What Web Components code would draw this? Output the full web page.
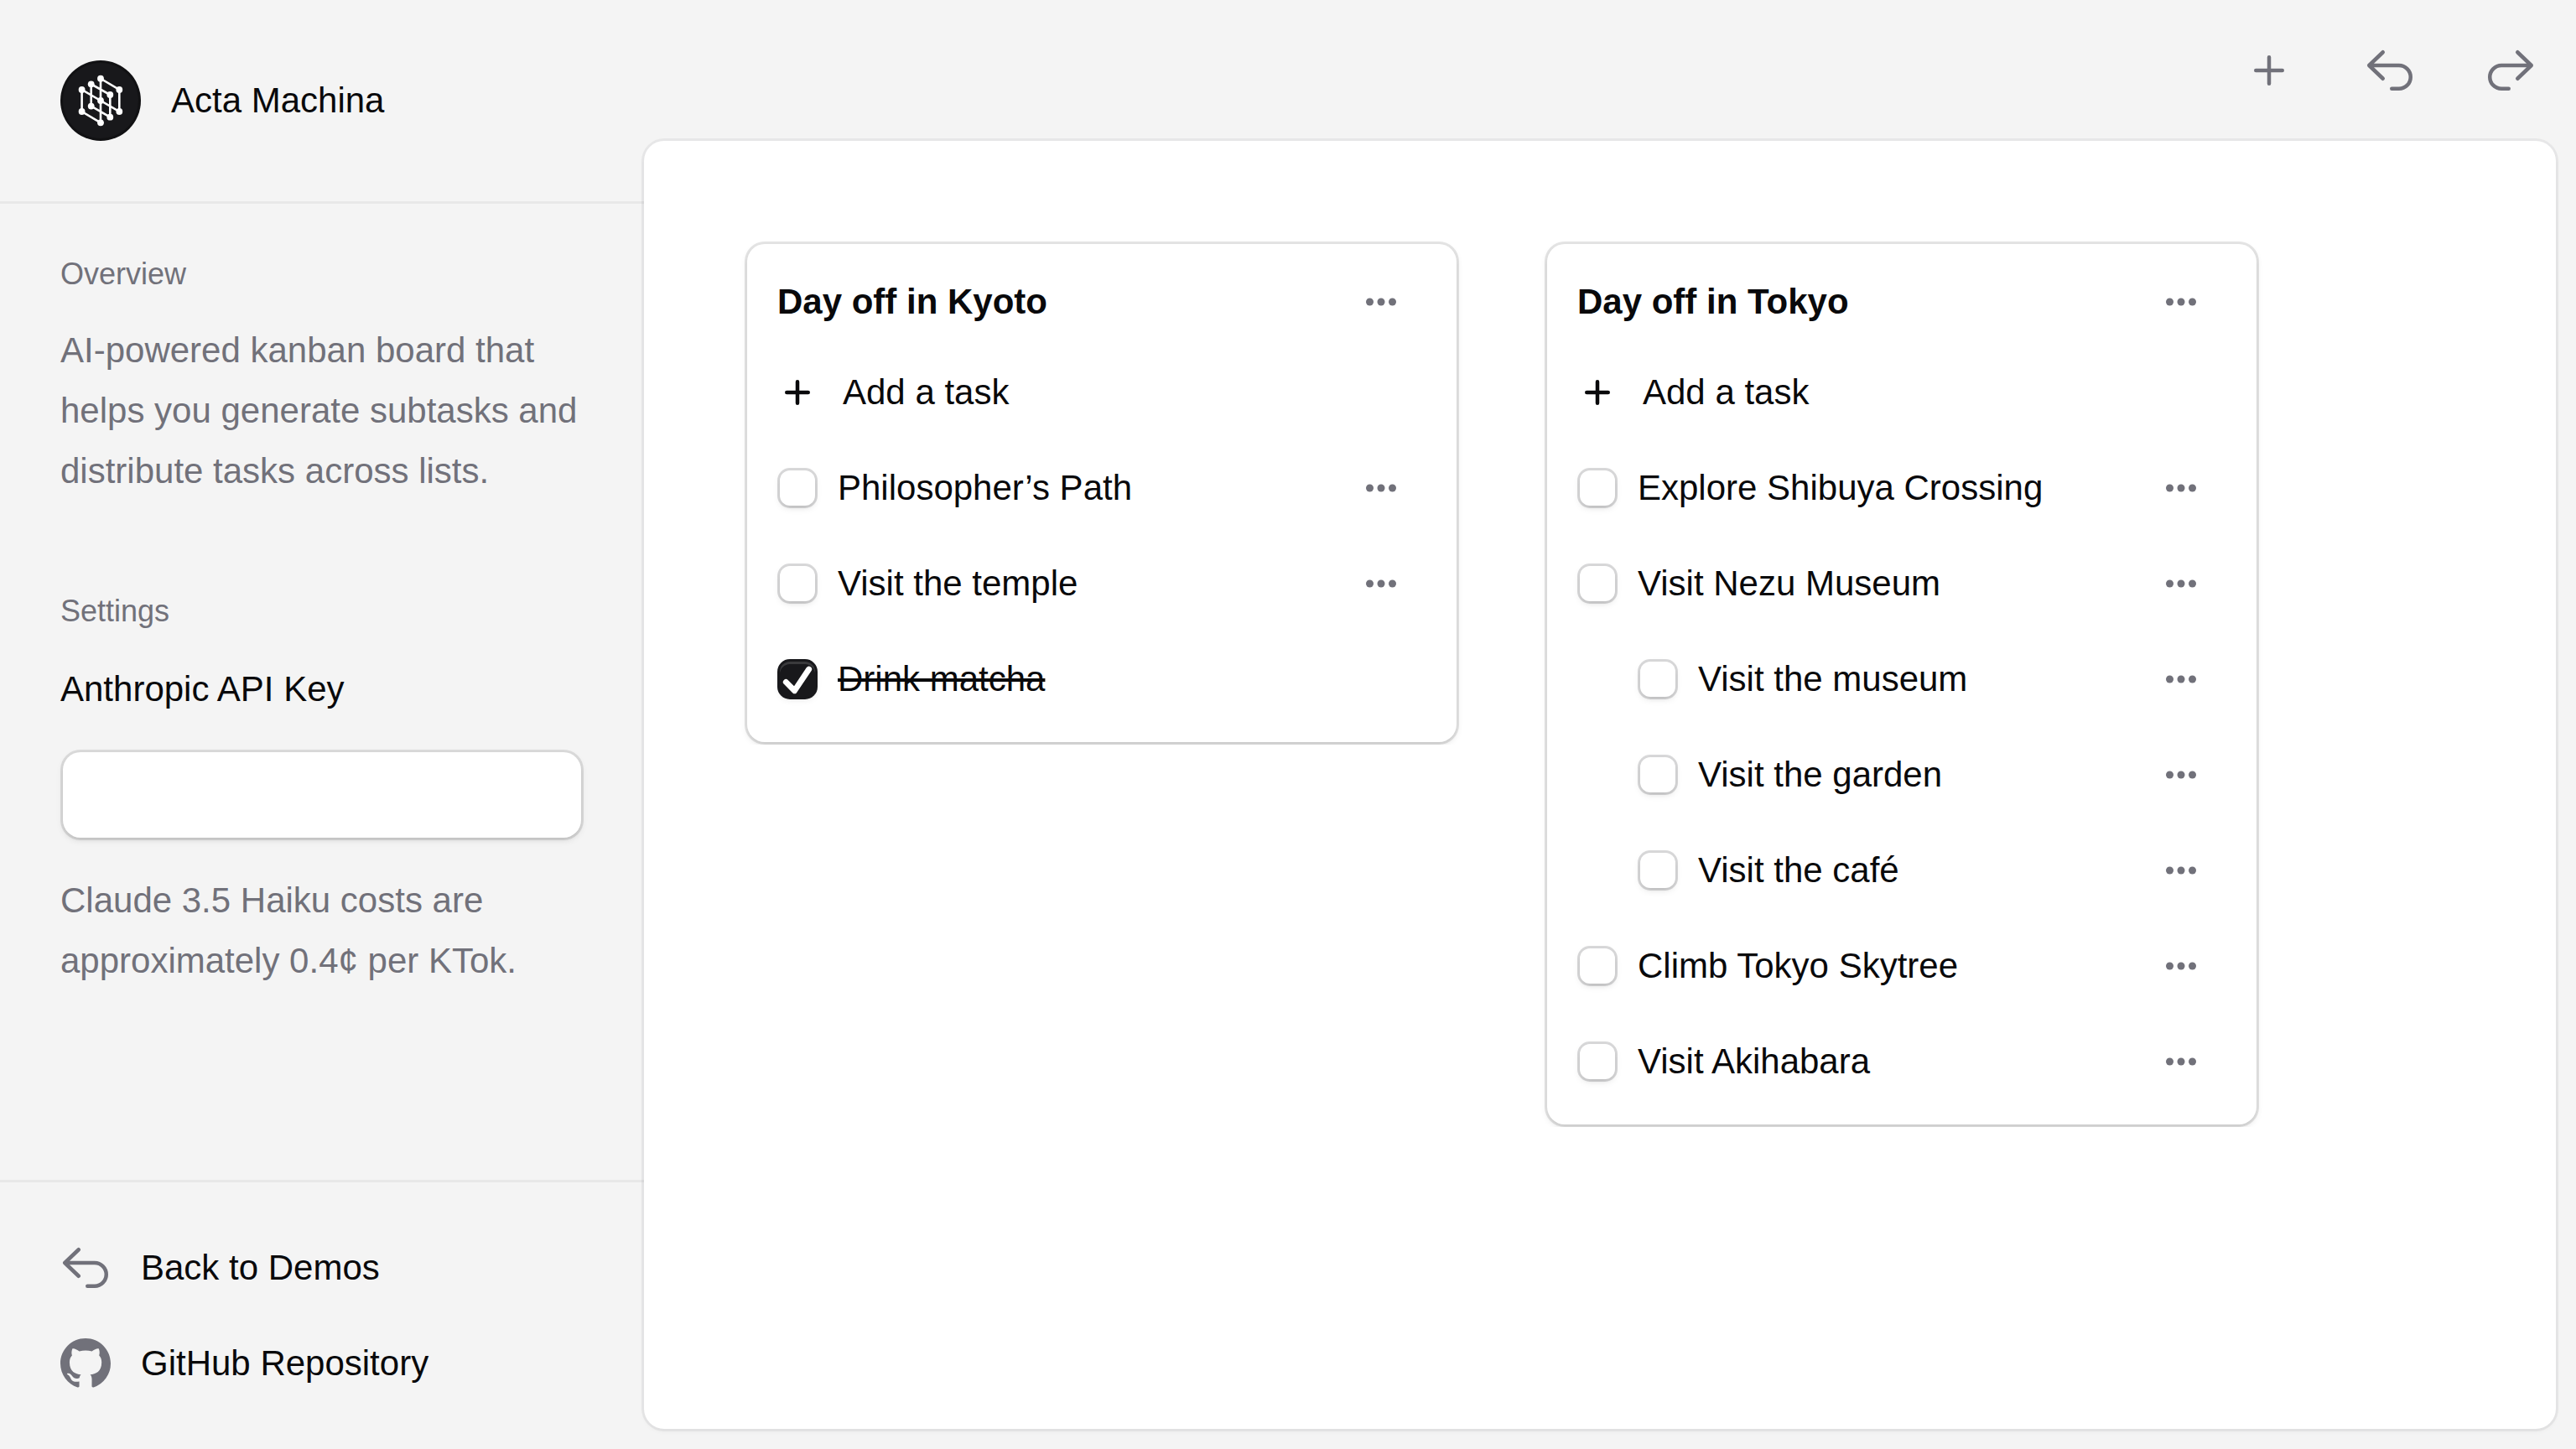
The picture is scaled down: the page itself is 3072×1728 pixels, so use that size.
<!DOCTYPE html>
<html lang="en">
<head>
<meta charset="utf-8">
<title>Acta Machina</title>
<style>
html, body { margin: 0; height: 100%; }
body {
  background: #f4f4f4;
  color: #09090b;
  font: 42px/60px "Liberation Sans", Arial, sans-serif;
  --muted: #71717a;
  --lift: 0 3px 9px rgba(0, 0, 0, .1), 0 3px 6px -3px rgba(0, 0, 0, .1);
}
</style>
</head>
<body>
<acta-app>
  <acta-sidebar slot="sidebar">
    <span slot="brand">Acta Machina</span>
    <sidebar-section heading="Overview">
      <p>AI-powered kanban board that helps you generate subtasks and distribute tasks across lists.</p>
    </sidebar-section>
    <sidebar-section heading="Settings">
      <api-key-field label="Anthropic API Key">Claude 3.5 Haiku costs are approximately 0.4¢ per KTok.</api-key-field>
    </sidebar-section>
    <sidebar-link slot="footer" icon="undo" href="#demos">Back to Demos</sidebar-link>
    <sidebar-link slot="footer" icon="github" href="#repository">GitHub Repository</sidebar-link>
  </acta-sidebar>
  <acta-toolbar slot="toolbar"></acta-toolbar>
  <task-list heading="Day off in Kyoto">
    <task-item menu>Philosopher’s Path</task-item>
    <task-item menu>Visit the temple</task-item>
    <task-item checked>Drink matcha</task-item>
  </task-list>
  <task-list heading="Day off in Tokyo">
    <task-item menu>Explore Shibuya Crossing</task-item>
    <task-item menu>Visit Nezu Museum</task-item>
    <task-item menu nested>Visit the museum</task-item>
    <task-item menu nested>Visit the garden</task-item>
    <task-item menu nested>Visit the café</task-item>
    <task-item menu>Climb Tokyo Skytree</task-item>
    <task-item menu>Visit Akihabara</task-item>
  </task-list>
</acta-app>

<script>
// name: [viewBox size, drawn size, artwork]
const ICONS = {
  plus: [20, 60, '<path d="M10 4.75v10.5M4.75 10h10.5"/>'],
  add: [16, 48, '<path d="M8 3.75v8.5M3.75 8h8.5"/>'],
  undo: [20, 60, '<path d="M7.25 2.75 1.75 8l5.5 5.25M1.75 8h11.875a4.625 4.625 0 0 1 0 9.25H10.75"/>'],
  redo: [20, 60, '<path d="M12.75 2.75 18.25 8l-5.5 5.25M18.25 8H6.375a4.625 4.625 0 0 0 0 9.25H9.25"/>'],
  dots: [16, 48, '<g fill="currentColor" stroke="none"><circle cx="3.5" cy="8" r="1.5"/><circle cx="8" cy="8" r="1.5"/><circle cx="12.5" cy="8" r="1.5"/></g>'],
  github: [16, 60, '<path fill="currentColor" stroke="none" d="M8 0C3.58 0 0 3.58 0 8c0 3.54 2.29 6.53 5.47 7.59.4.07.55-.17.55-.38 0-.19-.01-.82-.01-1.49-2.01.37-2.53-.49-2.69-.94-.09-.23-.48-.94-.82-1.13-.28-.15-.68-.52-.01-.53.63-.01 1.08.58 1.23.82.72 1.21 1.87.87 2.33.66.07-.52.28-.87.51-1.07-1.78-.2-3.64-.89-3.64-3.95 0-.87.31-1.59.82-2.15-.08-.2-.36-1.02.08-2.12 0 0 .67-.21 2.2.82.64-.18 1.32-.27 2-.27s1.36.09 2 .27c1.53-1.04 2.2-.82 2.2-.82.44 1.1.16 1.92.08 2.12.51.56.82 1.27.82 2.15 0 3.07-1.87 3.75-3.65 3.95.29.25.54.73.54 1.48 0 1.07-.01 1.93-.01 2.2 0 .21.15.46.55.38A8.01 8.01 0 0 0 16 8c0-4.42-3.58-8-8-8Z"/>']
};
const icon = (name) => {
  const [box, size, art] = ICONS[name];
  return `<svg class="icon" width="${size}" height="${size}" viewBox="0 0 ${box} ${box}" fill="none" stroke="currentColor" stroke-width="1.5" stroke-linecap="round" stroke-linejoin="round" aria-hidden="true">${art}</svg>`;
};
const RESET = `:host,*{box-sizing:border-box}:host{display:block}.icon{display:block;flex:none}
button{font:inherit;color:inherit;background:none;border:0;margin:0;padding:0;cursor:pointer}`;

class Base extends HTMLElement {
  connectedCallback() {
    if (this.shadowRoot) return;
    this.attachShadow({ mode: 'open' }).innerHTML = `<style>${RESET}${this.css()}</style>${this.html()}`;
  }
}

customElements.define('acta-app', class extends Base {
  css() { return `
    :host{display:flex;min-height:100vh}
    .side{flex:0 0 768px;display:flex}
    .main{flex:1;min-width:0;display:flex;flex-direction:column;padding:0 24px 24px 0}
    .board{flex:1;display:flex;align-items:flex-start;gap:108px;padding:123px;background:#fff;border-radius:24px;box-shadow:0 0 0 3px rgba(9,9,11,.05),0 3px 6px rgba(0,0,0,.04)}`; }
  html() { return `<div class="side"><slot name="sidebar"></slot></div>
    <div class="main"><slot name="toolbar"></slot><main class="board"><slot></slot></main></div>`; }
});

customElements.define('acta-sidebar', class extends Base {
  css() { return `
    :host{flex:1;display:flex;flex-direction:column}
    header{display:flex;align-items:center;gap:36px;padding:72px;border-bottom:3px solid #e8e8e8}
    .body{flex:1;display:flex;flex-direction:column;gap:95px;padding:48px 72px}
    footer{display:flex;flex-direction:column;gap:6px;padding:48px 72px;border-top:3px solid #e8e8e8}
    .logo{display:block;flex:none}`; }
  html() {
    const nodes = [[48,21.7],[70.3,35],[70.3,61],[59.3,41],[59.3,67.7],[48,48],[36.7,28.3],[36.7,54.6],[25.6,35],[25.6,61],[48,74.3]];
    return `<header>
      <svg class="logo" width="96" height="96" viewBox="0 0 96 96" role="img" aria-label="Acta Machina logo">
        <circle cx="48" cy="48" r="48" fill="#111113"/><circle cx="48" cy="48" r="45" fill="#18181b"/>
        <path fill="none" stroke="#fff" stroke-width="2.6" d="M48 74.3V21.7L70.3 35V61L25.6 35V61L48 74.3M59.3 67.7V41L36.7 28.3V54.6Z"/>
        ${nodes.map(([x, y]) => `<circle cx="${x}" cy="${y}" r="3.9" fill="#fff"/>`).join('')}
      </svg><slot name="brand"></slot></header>
    <div class="body"><slot></slot></div>
    <footer><slot name="footer"></slot></footer>`;
  }
});

customElements.define('sidebar-section', class extends Base {
  css() { return `
    :host{color:var(--muted);line-height:72px}
    h2{margin:0 0 19px;font-size:36px;line-height:72px;font-weight:400}
    ::slotted(p){margin:0}`; }
  html() { return `<h2>${this.getAttribute('heading')}</h2><slot></slot>`; }
});

customElements.define('api-key-field', class extends Base {
  css() { return `
    label{display:block;color:#09090b;padding:2px 0 36px}
    .frame{padding:3px}
    input{display:block;width:100%;height:102px;padding:0 33px;font:inherit;color:#09090b;background:#fff;border:0;border-radius:21px;box-shadow:0 0 0 3px rgba(9,9,11,.1),var(--lift);outline:0}
    p{margin:36px 0 0}`; }
  html() { return `<label for="key">${this.getAttribute('label')}</label>
    <div class="frame"><input id="key" type="password" autocomplete="off" aria-describedby="hint"></div><p id="hint"><slot></slot></p>`; }
});

customElements.define('sidebar-link', class extends Base {
  css() { return `
    a{display:flex;align-items:center;gap:36px;padding:24px 0;color:inherit;text-decoration:none}
    .icon{color:var(--muted)}`; }
  html() { return `<a href="${this.getAttribute('href')}">${icon(this.getAttribute('icon'))}<slot></slot></a>`; }
});

customElements.define('acta-toolbar', class extends Base {
  css() { return `
    :host{display:flex;justify-content:flex-end;gap:36px;padding:30px 0;color:var(--muted)}
    button{padding:24px}`; }
  html() { return `<button type="button" aria-label="Add list">${icon('plus')}</button>
    <button type="button" aria-label="Undo">${icon('undo')}</button>
    <button type="button" aria-label="Redo">${icon('redo')}</button>`; }
});

customElements.define('task-list', class extends Base {
  css() { return `
    :host{flex:0 0 846px;padding:15px 36px 21px;background:#fff;border-radius:21px;box-shadow:0 0 0 3px rgba(9,9,11,.1),var(--lift);clip-path:inset(-18px -18px -3px)}
    header{display:flex;align-items:center;justify-content:space-between}
    h2{margin:0;font-size:42px;line-height:60px;font-weight:700}
    .menu{padding:30px;color:var(--muted)}
    .add{display:flex;align-items:center;gap:30px;padding:24px 0}
    .items{display:flex;flex-direction:column;gap:6px;margin-top:6px}`; }
  html() { return `<header><h2>${this.getAttribute('heading')}</h2><button class="menu" type="button" aria-label="List options">${icon('dots')}</button></header>
    <button class="add" type="button">${icon('add')}Add a task</button>
    <div class="items"><slot></slot></div>`; }
});

customElements.define('task-item', class extends Base {
  css() { return `
    :host{display:flex;align-items:center;justify-content:space-between;min-height:108px}
    :host([nested]){padding-left:72px}
    label{display:flex;align-items:center;gap:24px}
    .box{display:grid;flex:none}
    .box>*{grid-area:1/1}
    input{appearance:none;width:42px;height:42px;margin:3px;background:#fff;border-radius:12px;box-shadow:0 0 0 3px rgba(9,9,11,.15),var(--lift)}
    input:checked{background:#18181b;box-shadow:inset 0 3px rgba(255,255,255,.15),0 0 0 3px #18181b,var(--lift)}
    .check{pointer-events:none;visibility:hidden}
    input:checked+.check{visibility:visible}
    :host([checked]) .text{text-decoration:line-through}
    button{padding:30px;color:var(--muted)}`; }
  html() { return `<label><span class="box"><input type="checkbox" ${this.hasAttribute('checked') ? 'checked' : ''}>
      <svg class="check" width="48" height="48" viewBox="0 0 14 14" fill="none" stroke="#fff" stroke-width="2" stroke-linecap="round" stroke-linejoin="round" aria-hidden="true"><path d="M3 8l3 3 5-7.5"/></svg></span>
      <span class="text"><slot></slot></span></label>
    ${this.hasAttribute('menu') ? `<button type="button" aria-label="Task options">${icon('dots')}</button>` : ''}`; }
});
</script>
</body>
</html>
